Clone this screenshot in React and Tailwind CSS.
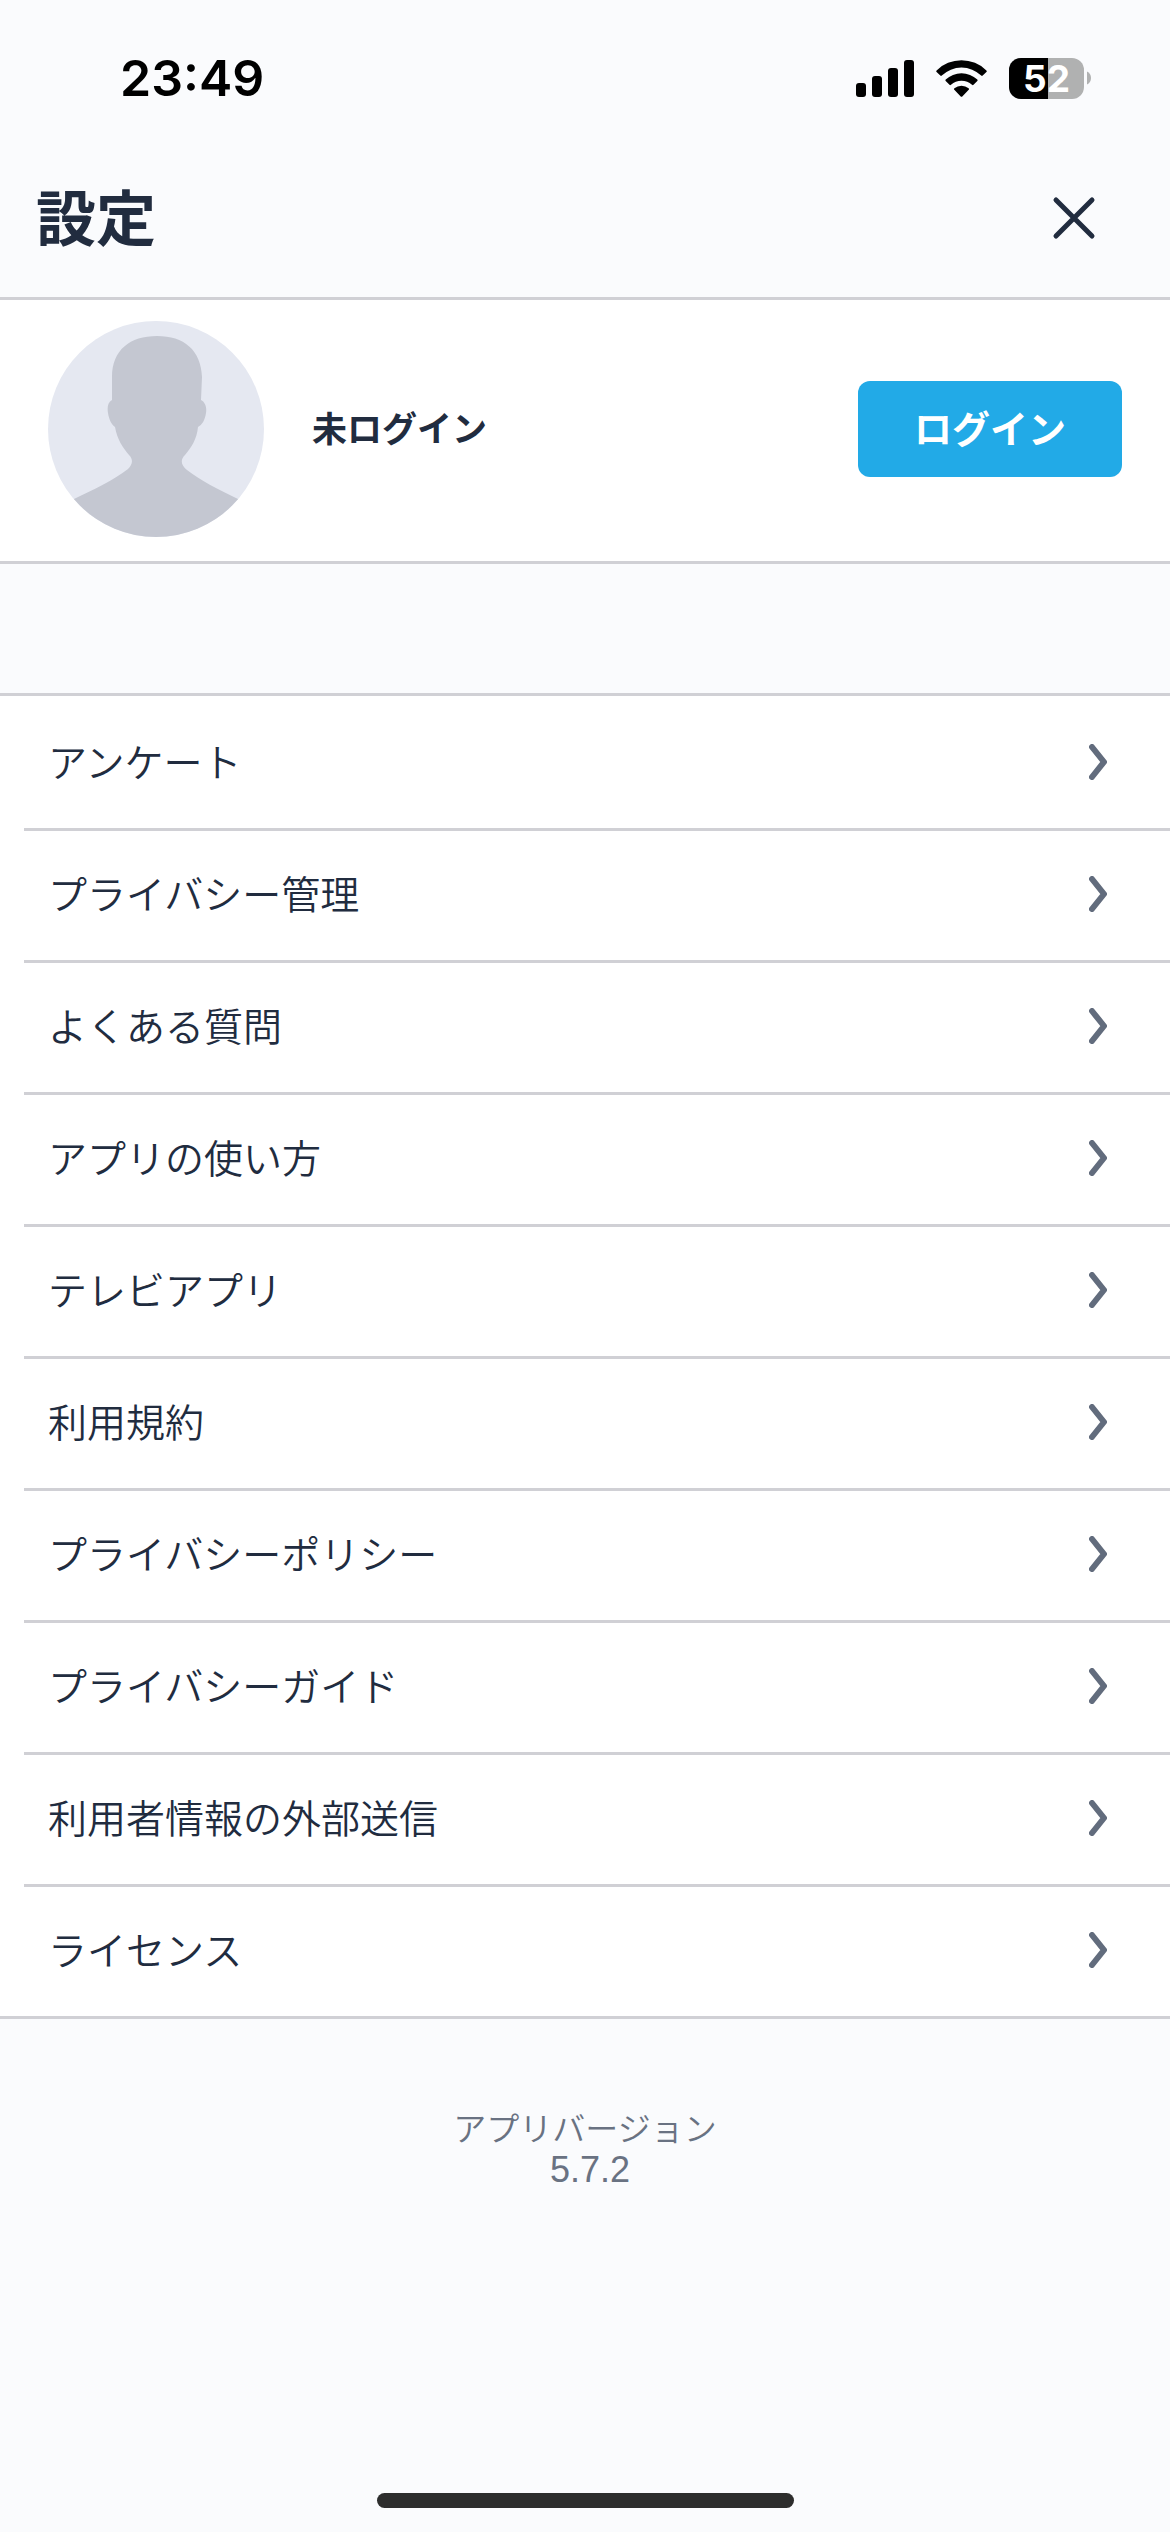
import { useState } from "react";

const MENU_ITEMS = [
  "アンケート",
  "プライバシー管理",
  "よくある質問",
  "アプリの使い方",
  "テレビアプリ",
  "利用規約",
  "プライバシーポリシー",
  "プライバシーガイド",
  "利用者情報の外部送信",
  "ライセンス"
];

function SignalIcon() {
  return (
    <svg viewBox="0 0 58 37" className="h-[37px] w-[58px]" aria-hidden="true">
      <rect x="0" y="23" width="10" height="14" rx="3" />
      <rect x="16" y="16" width="10" height="21" rx="3" />
      <rect x="32" y="8" width="10" height="29" rx="3" />
      <rect x="48" y="0" width="10" height="37" rx="3" />
    </svg>
  );
}

function WifiIcon() {
  return (
    <svg viewBox="0 0 51 37" className="h-[37px] w-[51px]" aria-hidden="true">
      <path d="M0.6 10.4a35.5 35.5 0 0 1 49.8 0c.5.5.5 1 0 1.500l-3.700 3.700c-.5.5-1 .5-1.500 0a28.300 28.300 0 0 0-39.400 0c-.5.5-1 .5-1.500 0L.6 11.900c-.5-.5-.5-1 0-1.500Z" />
      <path d="M9.7 19.6a23 23 0 0 1 31.6 0c.5.5.5 1 0 1.500l-3.800 3.700c-.5.5-1 .4-1.500 0a15.600 15.600 0 0 0-21 0c-.5.4-1 .5-1.500 0l-3.800-3.700c-.5-.5-.5-1 0-1.500Z" />
      <path d="M18.4 28.3a11 11 0 0 1 14.2 0c.6.5.6 1 .1 1.500l-6.400 6.600c-.5.5-1.100.5-1.600 0l-6.400-6.600c-.5-.5-.5-1 .1-1.500Z" />
    </svg>
  );
}

function Battery({ level }) {
  return (
    <div className="flex items-center gap-[3px]">
      <div className="relative flex h-[41px] w-[75px] items-center justify-center rounded-[12px] bg-[#b0b1b1]">
        <div className="absolute inset-y-0 left-0 rounded-l-[12px] bg-black" style={{ width: `${level}%` }} />
        <span className="relative font-['Inter',sans-serif] text-[37px] leading-[41px] font-bold text-white">
          {level}
        </span>
      </div>
      <svg viewBox="0 0 4 14" className="h-[14px] w-[4px]" aria-hidden="true">
        <path d="M0 0.5C2.4 1.5 4 4 4 7s-1.600 5.500-4 6.500Z" fill="#b0b1b1" />
      </svg>
    </div>
  );
}

function StatusBar() {
  return (
    <div className="flex h-[156px] items-center justify-between pr-[79px] pl-[120px] text-black">
      <span className="font-['Inter',sans-serif] text-[50px] leading-[60px] font-semibold">23:49</span>
      <div className="flex items-center gap-[22px]">
        <SignalIcon />
        <WifiIcon />
        <Battery level={52} />
      </div>
    </div>
  );
}

function Avatar() {
  return (
    <svg viewBox="0 0 216 216" className="size-[216px] shrink-0 rounded-full bg-[#e5e8f1]" aria-hidden="true">
      <path
        fill="#c4c7d1"
        d="M109 15C82 15 64 29 64 56V79C60 81 59 86 60 92C61 99 64 104 67 106C69 118 75 127 81 134C86 139 84 144 80 148C66 159 45 169 26 178V216H190V178C171 169 152 159 139 149C133 144 132 139 137 134C143 127 149 118 150 106C154 104 157 99 158 92C159 86 157 81 153 79L154 56C153 29 136 15 109 15Z"
      />
    </svg>
  );
}

function ChevronIcon() {
  return (
    <svg viewBox="0 0 18 36" className="h-9 w-[18px]" fill="none" aria-hidden="true">
      <path
        d="M3 3L15 18L3 33"
        stroke="#626c7d"
        strokeWidth="6"
        strokeLinecap="round"
        strokeLinejoin="round"
      />
    </svg>
  );
}

function MenuItem({ label }) {
  return (
    <li className="ml-6 flex h-[132px] border-t-[3px] border-[#d0d0d5] first:border-transparent">
      <button
        type="button"
        className="flex flex-1 items-center justify-between pr-[63px] pb-[3px] pl-6 text-left"
      >
        <span className="pb-[5px] text-[39px] leading-[58px] font-[350]">{label}</span>
        <ChevronIcon />
      </button>
    </li>
  );
}

export default function App() {
  const [open, setOpen] = useState(true);

  if (!open) {
    return null;
  }

  return (
    <div className="flex min-h-screen flex-col bg-[#fafbfd] font-['Noto_Sans_CJK_JP',sans-serif] text-[#212c3f]">
      <StatusBar />

      <header className="flex h-36 items-center justify-between border-b-[3px] border-[#d0d0d5] pr-[72px] pb-[18px] pl-9">
        <h1 className="pb-[5px] text-[60px] leading-[88px] font-bold">設定</h1>
        <button type="button" aria-label="閉じる" onClick={() => setOpen(false)}>
          <svg viewBox="0 0 48 48" className="size-12" fill="none" aria-hidden="true">
            <path d="M6 6L42 42M42 6L6 42" stroke="currentColor" strokeWidth="5" strokeLinecap="round" />
          </svg>
        </button>
      </header>

      <main>
        <section className="flex items-center border-b-[3px] border-[#d0d0d5] bg-white px-12 pt-[21px] pb-6">
          <Avatar />
          <p className="ml-12 flex-1 pb-[5px] text-[35px] leading-[58px] font-bold">未ログイン</p>
          <button
            type="button"
            className="h-24 w-[264px] rounded-[12px] bg-[#22aae7] pb-[5px] text-[38px] leading-[58px] font-bold text-white"
          >
            ログイン
          </button>
        </section>

        <ul className="mt-[129px] border-y-[3px] border-[#d0d0d5] bg-white">
          {MENU_ITEMS.map((label) => (
            <MenuItem key={label} label={label} />
          ))}
        </ul>
      </main>

      <footer className="mt-[87px] text-center font-[350] text-[#697282]">
        <p className="text-[33px] leading-[42px]">アプリバージョン</p>
        <p className="font-['Liberation_Sans',sans-serif] text-[36px] leading-[44px]">&nbsp;5.7.2</p>
      </footer>

      <div className="mx-auto mt-auto mb-6 h-[15px] w-[417px] rounded-full bg-[#2d2d2d]" />
    </div>
  );
}
